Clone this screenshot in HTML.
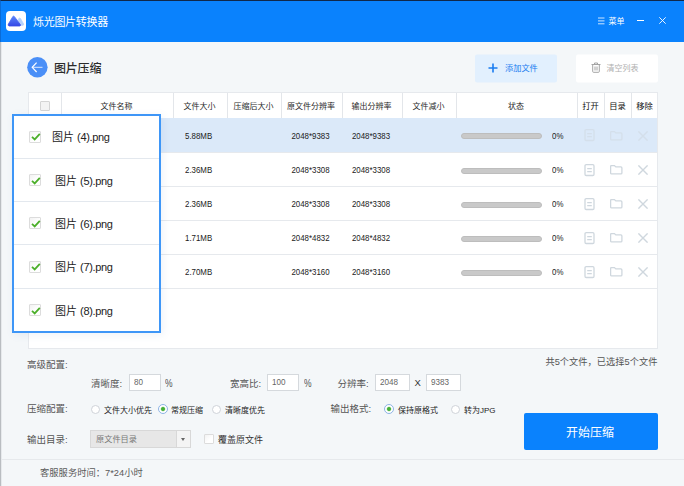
<!DOCTYPE html>
<html><head><meta charset="utf-8">
<style>
*{box-sizing:border-box;margin:0;padding:0}
html,body{width:684px;height:486px;overflow:hidden}
body{position:relative;background:#f4f7f9;font-family:"Liberation Sans","Noto Sans CJK SC",sans-serif;font-size:9px;color:#333}
.a{position:absolute;white-space:nowrap}
.c{text-align:center}
#tb{left:0;top:0;width:684px;height:42px;background:#0a82fd;border-top:1px solid #10284a;border-left:1px solid #0a6bd6}
#lb{left:0;top:42px;width:1px;height:444px;background:#b9bdc1}
#lb2{left:1px;top:42px;width:1px;height:444px;background:#e6e9ec}
.hd{top:94px;height:25px;line-height:25px;text-align:center;font-size:8px;color:#2a2a2a}
.vl{top:93px;width:1px;height:25px;background:#e3e6ea}
.row{left:29px;width:628px;border-bottom:1px solid #e6e9ed}
.t{font-size:9.5px;color:#222;line-height:12px;transform:scaleX(.83)}
.tl{transform-origin:0 50%}
.bar{left:461px;width:81px;height:6px;border-radius:3px;background:#c9c9c9;border:1px solid #bdbdbd}
.pr{left:14px;width:145px;height:1px;background:#e3e8ee}
.pt{font-size:11px;color:#222;line-height:14px}
.pt i{font-style:normal;letter-spacing:-.35px}
.cb{width:12px;height:12px;border:1px solid #dcdcdc;background:linear-gradient(135deg,#f2f2f2,#fff 60%);border-radius:1px}
.lab{font-size:9.5px;color:#555;line-height:12px}
.in{height:17px;border:1px solid #d5d9dd;background:#fff;font-size:9px;line-height:15px;padding-left:4px;color:#666}
.in span{display:inline-block;transform:scaleX(.9);transform-origin:0 50%}
.pc{font-size:10px;color:#555;line-height:12px;transform:scaleX(.85);transform-origin:0 50%}
.sm{font-size:8px;color:#222;line-height:12px}
.rd{width:9px;height:9px;border-radius:50%;border:1px solid #cfd3d9;background:#fff}
.rd.on{width:10px;height:10px;border-color:#8db4e6;background:radial-gradient(circle,#45b038 0,#45b038 1.5px,#fff 2.7px)}
.ic{stroke:#cfd7de;fill:none;stroke-width:1.3}
</style></head><body>
<div class="a" id="tb"></div>
<div class="a" id="lb"></div><div class="a" id="lb2"></div>
<div class="a" style="left:6px;top:11px;width:20px;height:20px;background:#fff;border-radius:4px"></div>
<svg class="a" style="left:6px;top:11px" width="20" height="20" viewBox="0 0 20 20"><defs><linearGradient id="g" x1="0" y1="0" x2="0" y2="1"><stop offset="0" stop-color="#5a84fa"/><stop offset="1" stop-color="#3548e6"/></linearGradient></defs><path d="M12 8.5 L13.2 7.2 Q13.9 6.6 14.5 7.5 L17.6 13 Q18 14.2 16.8 14.3 L14 14.3Z" fill="#b5d2fc" stroke="#b5d2fc" stroke-width="0.8" stroke-linejoin="round"/><path d="M2.3 13.2 L6.8 5.6 Q7.6 4.6 8.4 5.6 L14.3 13.6 Q14.9 14.9 13.6 15 L3.2 15 Q1.8 14.8 2.3 13.2Z" fill="url(#g)" stroke="url(#g)" stroke-width="0.8" stroke-linejoin="round"/></svg>
<div class="a" style="left:33px;top:14px;font-size:11px;color:#fff;line-height:16px;letter-spacing:-.3px">烁光图片转换器</div>
<svg class="a" style="left:597.5px;top:17px" width="7" height="8" viewBox="0 0 7 8"><path d="M0 1H6.5M0 3.9H6.5M0 6.8H6.5" stroke="#fff" stroke-width="0.8"/></svg>
<div class="a" style="left:608.5px;top:16px;font-size:8px;color:#fff;line-height:12px">菜单</div>
<div class="a" style="left:637px;top:20px;width:7px;height:1px;background:#fff"></div>
<svg class="a" style="left:658.5px;top:17px" width="7" height="7" viewBox="0 0 7 7"><path d="M0.3 0.3L6.7 6.7M6.7 0.3L0.3 6.7" stroke="#fff" stroke-width="0.9"/></svg>
<svg class="a" style="left:27px;top:57px" width="21" height="21" viewBox="0 0 21 21"><circle cx="10.4" cy="10.3" r="10.2" fill="#4a8ff7"/><path d="M15.5 10.3H5.5" stroke="#dbe8fd" stroke-width="1" fill="none"/><path d="M9.6 5.6L5.2 10.3L9.6 15" stroke="#fff" stroke-width="1.2" fill="none"/></svg>
<div class="a" style="left:54px;top:59px;font-size:12px;font-weight:500;color:#2b2b2b;line-height:20px;letter-spacing:-.2px">图片压缩</div>
<div class="a" style="left:475px;top:54px;width:82px;height:28px;background:#e2f0fe;border-radius:2px;transform:translateY(.5px)"></div>
<svg class="a" style="left:488px;top:63px" width="10" height="10" viewBox="0 0 10 10"><path d="M5 0.5V9.5M0.5 5H9.5" stroke="#1a7cf0" stroke-width="1.6"/></svg>
<div class="a" style="left:505px;top:63px;font-size:8.2px;color:#1a7cf0;line-height:12px">添加文件</div>
<div class="a" style="left:576px;top:54px;width:82px;height:28px;background:#fff;border-radius:2px;transform:translateY(.5px)"></div>
<svg class="a" style="left:590.5px;top:62px" width="10" height="11" viewBox="0 0 10 11"><path d="M0.5 2.5H9.5M3.5 2.5V1H6.5V2.5M1.7 2.5V9.5Q1.7 10.3 2.5 10.3H7.5Q8.3 10.3 8.3 9.5V2.5M4 4.5V8.5M6 4.5V8.5" stroke="#a4a4a4" stroke-width="1" fill="none"/></svg>
<div class="a" style="left:606.5px;top:63px;font-size:8px;color:#b0b0b0;line-height:12px">清空列表</div>
<div class="a" style="left:28px;top:92px;width:630px;height:257px;background:#fff;border:1px solid #e6e9ed"></div>

<div class="a vl" style="left:61px"></div>
<div class="a hd" style="left:60.5px;width:112px">文件名称</div>
<div class="a vl" style="left:173px"></div>
<div class="a hd" style="left:172.5px;width:54px">文件大小</div>
<div class="a vl" style="left:227px"></div>
<div class="a hd" style="left:226.5px;width:54px">压缩后大小</div>
<div class="a vl" style="left:281px"></div>
<div class="a hd" style="left:280.5px;width:61px">原文件分辨率</div>
<div class="a vl" style="left:342px"></div>
<div class="a hd" style="left:341.5px;width:60px">输出分辨率</div>
<div class="a vl" style="left:402px"></div>
<div class="a hd" style="left:401.5px;width:54px">文件减小</div>
<div class="a vl" style="left:456px"></div>
<div class="a hd" style="left:455.5px;width:121px">状态</div>
<div class="a vl" style="left:577px"></div>
<div class="a hd" style="left:577px;width:27px;color:#111;font-size:8.3px">打开</div>
<div class="a vl" style="left:604px"></div>
<div class="a hd" style="left:604px;width:27px;color:#111;font-size:8.3px">目录</div>
<div class="a vl" style="left:631px"></div>
<div class="a hd" style="left:631px;width:27px;color:#111;font-size:8.3px">移除</div>
<div class="a cb" style="left:40px;top:101px;width:10px;height:10px;background:#f3f3f3;border-color:#d4d4d4"></div>
<div class="a row" style="top:118px;height:35px;background:#dbe9f9;"></div>
<div class="a t tl" style="left:184.5px;top:129.75px">5.88MB</div>
<div class="a t c" style="left:279.5px;width:61px;top:129.75px">2048*9383</div>
<div class="a t c" style="left:340.5px;width:60px;top:129.75px">2048*9383</div>
<div class="a bar" style="top:133.0px"></div>
<div class="a t tl" style="left:552px;top:129.75px">0%</div>
<svg class="a" style="left:584px;top:129.0px;opacity:.5;" width="11" height="13" viewBox="0 0 11 13"><rect x="1" y="0.7" width="9" height="10.8" rx="1.2" class="ic"/><path d="M3.2 4.6H7.8M3.2 7.6H7.8" class="ic"/></svg>
<svg class="a" style="left:610px;top:130.5px;opacity:.5;" width="13" height="10" viewBox="0 0 13 10"><path d="M0.6 1.6Q0.6 0.6 1.6 0.6H4.4L5.8 1.9H10.9Q11.9 1.9 11.9 2.9V7.9Q11.9 8.9 10.9 8.9H1.6Q0.6 8.9 0.6 7.9Z" class="ic"/></svg>
<svg class="a" style="left:637.5px;top:130.5px;opacity:.5;" width="10" height="10" viewBox="0 0 10 10"><path d="M0.4 0.4L9.6 9.6M9.6 0.4L0.4 9.6" class="ic" style="stroke-width:1.4"/></svg>
<div class="a row" style="top:153px;height:34px;"></div>
<div class="a t tl" style="left:184.5px;top:164.25px">2.36MB</div>
<div class="a t c" style="left:279.5px;width:61px;top:164.25px">2048*3308</div>
<div class="a t c" style="left:340.5px;width:60px;top:164.25px">2048*3308</div>
<div class="a bar" style="top:167.5px"></div>
<div class="a t tl" style="left:552px;top:164.25px">0%</div>
<svg class="a" style="left:584px;top:163.5px;" width="11" height="13" viewBox="0 0 11 13"><rect x="1" y="0.7" width="9" height="10.8" rx="1.2" class="ic"/><path d="M3.2 4.6H7.8M3.2 7.6H7.8" class="ic"/></svg>
<svg class="a" style="left:610px;top:165.0px;" width="13" height="10" viewBox="0 0 13 10"><path d="M0.6 1.6Q0.6 0.6 1.6 0.6H4.4L5.8 1.9H10.9Q11.9 1.9 11.9 2.9V7.9Q11.9 8.9 10.9 8.9H1.6Q0.6 8.9 0.6 7.9Z" class="ic"/></svg>
<svg class="a" style="left:637.5px;top:165.0px;" width="10" height="10" viewBox="0 0 10 10"><path d="M0.4 0.4L9.6 9.6M9.6 0.4L0.4 9.6" class="ic" style="stroke-width:1.4"/></svg>
<div class="a row" style="top:187px;height:34px;"></div>
<div class="a t tl" style="left:184.5px;top:198.25px">2.36MB</div>
<div class="a t c" style="left:279.5px;width:61px;top:198.25px">2048*3308</div>
<div class="a t c" style="left:340.5px;width:60px;top:198.25px">2048*3308</div>
<div class="a bar" style="top:201.5px"></div>
<div class="a t tl" style="left:552px;top:198.25px">0%</div>
<svg class="a" style="left:584px;top:197.5px;" width="11" height="13" viewBox="0 0 11 13"><rect x="1" y="0.7" width="9" height="10.8" rx="1.2" class="ic"/><path d="M3.2 4.6H7.8M3.2 7.6H7.8" class="ic"/></svg>
<svg class="a" style="left:610px;top:199.0px;" width="13" height="10" viewBox="0 0 13 10"><path d="M0.6 1.6Q0.6 0.6 1.6 0.6H4.4L5.8 1.9H10.9Q11.9 1.9 11.9 2.9V7.9Q11.9 8.9 10.9 8.9H1.6Q0.6 8.9 0.6 7.9Z" class="ic"/></svg>
<svg class="a" style="left:637.5px;top:199.0px;" width="10" height="10" viewBox="0 0 10 10"><path d="M0.4 0.4L9.6 9.6M9.6 0.4L0.4 9.6" class="ic" style="stroke-width:1.4"/></svg>
<div class="a row" style="top:221px;height:34px;"></div>
<div class="a t tl" style="left:184.5px;top:232.25px">1.71MB</div>
<div class="a t c" style="left:279.5px;width:61px;top:232.25px">2048*4832</div>
<div class="a t c" style="left:340.5px;width:60px;top:232.25px">2048*4832</div>
<div class="a bar" style="top:235.5px"></div>
<div class="a t tl" style="left:552px;top:232.25px">0%</div>
<svg class="a" style="left:584px;top:231.5px;" width="11" height="13" viewBox="0 0 11 13"><rect x="1" y="0.7" width="9" height="10.8" rx="1.2" class="ic"/><path d="M3.2 4.6H7.8M3.2 7.6H7.8" class="ic"/></svg>
<svg class="a" style="left:610px;top:233.0px;" width="13" height="10" viewBox="0 0 13 10"><path d="M0.6 1.6Q0.6 0.6 1.6 0.6H4.4L5.8 1.9H10.9Q11.9 1.9 11.9 2.9V7.9Q11.9 8.9 10.9 8.9H1.6Q0.6 8.9 0.6 7.9Z" class="ic"/></svg>
<svg class="a" style="left:637.5px;top:233.0px;" width="10" height="10" viewBox="0 0 10 10"><path d="M0.4 0.4L9.6 9.6M9.6 0.4L0.4 9.6" class="ic" style="stroke-width:1.4"/></svg>
<div class="a row" style="top:255px;height:34px;"></div>
<div class="a t tl" style="left:184.5px;top:266.25px">2.70MB</div>
<div class="a t c" style="left:279.5px;width:61px;top:266.25px">2048*3160</div>
<div class="a t c" style="left:340.5px;width:60px;top:266.25px">2048*3160</div>
<div class="a bar" style="top:269.5px"></div>
<div class="a t tl" style="left:552px;top:266.25px">0%</div>
<svg class="a" style="left:584px;top:265.5px;" width="11" height="13" viewBox="0 0 11 13"><rect x="1" y="0.7" width="9" height="10.8" rx="1.2" class="ic"/><path d="M3.2 4.6H7.8M3.2 7.6H7.8" class="ic"/></svg>
<svg class="a" style="left:610px;top:267.0px;" width="13" height="10" viewBox="0 0 13 10"><path d="M0.6 1.6Q0.6 0.6 1.6 0.6H4.4L5.8 1.9H10.9Q11.9 1.9 11.9 2.9V7.9Q11.9 8.9 10.9 8.9H1.6Q0.6 8.9 0.6 7.9Z" class="ic"/></svg>
<svg class="a" style="left:637.5px;top:267.0px;" width="10" height="10" viewBox="0 0 10 10"><path d="M0.4 0.4L9.6 9.6M9.6 0.4L0.4 9.6" class="ic" style="stroke-width:1.4"/></svg>
<div class="a" style="left:12px;top:113.5px;width:148.5px;height:219.0px;background:#fff;border:2px solid #3e96f7;box-shadow:2px 2px 8px rgba(90,130,190,.10)"></div>
<div class="a cb" style="left:29px;top:130.5px"></div>
<svg class="a" style="left:31px;top:133.0px" width="10" height="8" viewBox="0 0 10 8"><path d="M1 3.8L3.7 6.4L8.8 0.9" stroke="#4caf2a" stroke-width="1.8" fill="none"/></svg>
<div class="a pt" style="left:52px;top:130.0px">图片 <i>(4).png</i></div>
<div class="a pr" style="top:158px"></div>
<div class="a cb" style="left:29px;top:174.0px"></div>
<svg class="a" style="left:31px;top:176.5px" width="10" height="8" viewBox="0 0 10 8"><path d="M1 3.8L3.7 6.4L8.8 0.9" stroke="#4caf2a" stroke-width="1.8" fill="none"/></svg>
<div class="a pt" style="left:55px;top:173.5px">图片 <i>(5).png</i></div>
<div class="a pr" style="top:201px"></div>
<div class="a cb" style="left:29px;top:217.0px"></div>
<svg class="a" style="left:31px;top:219.5px" width="10" height="8" viewBox="0 0 10 8"><path d="M1 3.8L3.7 6.4L8.8 0.9" stroke="#4caf2a" stroke-width="1.8" fill="none"/></svg>
<div class="a pt" style="left:55px;top:216.5px">图片 <i>(6).png</i></div>
<div class="a pr" style="top:244px"></div>
<div class="a cb" style="left:29px;top:260.5px"></div>
<svg class="a" style="left:31px;top:263.0px" width="10" height="8" viewBox="0 0 10 8"><path d="M1 3.8L3.7 6.4L8.8 0.9" stroke="#4caf2a" stroke-width="1.8" fill="none"/></svg>
<div class="a pt" style="left:55px;top:260.0px">图片 <i>(7).png</i></div>
<div class="a pr" style="top:288px"></div>
<div class="a cb" style="left:29px;top:304.25px"></div>
<svg class="a" style="left:31px;top:306.75px" width="10" height="8" viewBox="0 0 10 8"><path d="M1 3.8L3.7 6.4L8.8 0.9" stroke="#4caf2a" stroke-width="1.8" fill="none"/></svg>
<div class="a pt" style="left:55px;top:303.75px">图片 <i>(8).png</i></div>
<div class="a lab" style="right:26.5px;top:356px;font-size:9.25px">共5个文件，已选择5个文件</div>
<div class="a lab" style="left:27px;top:359px">高级配置:</div>
<div class="a lab" style="left:91px;top:377.5px">清晰度:</div>
<div class="a in" style="left:129px;top:374px;width:32px"><span>80</span></div>
<div class="a pc" style="left:165px;top:378px">%</div>
<div class="a lab" style="left:230px;top:377.5px">宽高比:</div>
<div class="a in" style="left:267px;top:374px;width:32px"><span>100</span></div>
<div class="a pc" style="left:303.5px;top:378px">%</div>
<div class="a lab" style="left:337.5px;top:377.5px">分辨率:</div>
<div class="a in" style="left:375px;top:374px;width:35px"><span>2048</span></div>
<div class="a lab" style="left:414.5px;top:377px;color:#333">X</div>
<div class="a in" style="left:426px;top:374px;width:35px"><span>9383</span></div>
<div class="a lab" style="left:27px;top:403px">压缩配置:</div>
<div class="a rd" style="left:91px;top:404.5px"></div><div class="a sm" style="left:104px;top:404.5px">文件大小优先</div>
<div class="a rd on" style="left:158px;top:404px"></div><div class="a sm" style="left:171px;top:404.5px">常规压缩</div>
<div class="a rd" style="left:211.5px;top:404.5px"></div><div class="a sm" style="left:225px;top:404.5px">清晰度优先</div>
<div class="a lab" style="left:330.5px;top:403px">输出格式:</div>
<div class="a rd on" style="left:384px;top:404px"></div><div class="a sm" style="left:398px;top:404.5px">保持原格式</div>
<div class="a rd" style="left:451px;top:404.5px"></div><div class="a sm" style="left:464px;top:404.5px">转为JPG</div>
<div class="a lab" style="left:27px;top:433.5px">输出目录:</div>
<div class="a" style="left:90px;top:430px;width:101px;height:18px;border:1px solid #d8d8d8;background:#e7e7e7"></div>
<div class="a" style="left:176px;top:431px;width:14px;height:16px;background:#f4f4f4;border-left:1px solid #d8d8d8"></div>
<div class="a" style="left:180.5px;top:438px;width:0;height:0;border-left:2.5px solid transparent;border-right:2.5px solid transparent;border-top:3px solid #666"></div>
<div class="a sm" style="left:96px;top:433.5px;color:#777;font-size:8.2px">原文件目录</div>
<div class="a cb" style="left:204px;top:434px;width:10px;height:10px"></div>
<div class="a lab" style="left:218px;top:433.5px;font-size:9px;color:#333">覆盖原文件</div>
<div class="a c" style="left:524px;top:413px;width:134px;height:37px;background:#0a82fd;border-radius:2px;color:#fff;font-size:12px;line-height:41px;padding-right:2px">开始压缩</div>
<div class="a" style="left:2px;top:459px;width:682px;height:1px;background:#e6e9ec"></div>
<div class="a lab" style="left:40px;top:467px;font-size:9.3px;color:#5a5a5a">客服服务时间：7*24小时</div>
</body></html>
